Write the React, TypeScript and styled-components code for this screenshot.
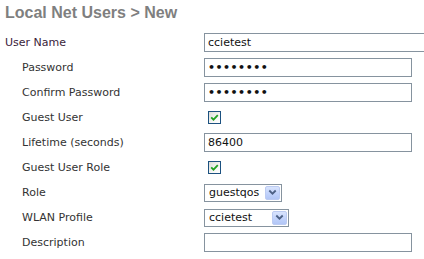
import styled, { createGlobalStyle } from "styled-components";

const GlobalStyle = createGlobalStyle`
  html, body {
    margin: 0;
    padding: 0;
    background: #ffffff;
  }
`;

const Page = styled.div`
  width: 424px;
  height: 259px;
  overflow: hidden;
  padding: 0 0 0 5px;
  box-sizing: border-box;
  font-family: "DejaVu Sans", Verdana, sans-serif;
  font-size: 11px;
`;

const Title = styled.h1`
  margin: 0;
  padding-top: 4px;
  height: 25px;
  box-sizing: border-box;
  font-family: "Liberation Sans", Arial, sans-serif;
  font-size: 16px;
  line-height: 18px;
  font-weight: bold;
  color: #7f7f7f;
  white-space: nowrap;
`;

const Form = styled.div`
  display: grid;
  grid-template-columns: 199px 1fr;
  grid-auto-rows: 25px;
  align-items: center;
  padding-top: 5px;
`;

const Label = styled.div<{ $indent?: boolean; $primary?: boolean }>`
  padding-left: ${(p) => (p.$indent ? "17px" : "0")};
  color: ${(p) => (p.$primary ? "#3a1d3a" : "#333333")};
  white-space: nowrap;
`;

const Field = styled.div`
  display: flex;
  align-items: center;
  min-width: 0;
`;

const TextInput = styled.input<{ $wide?: boolean }>`
  box-sizing: border-box;
  width: ${(p) => (p.$wide ? "240px" : "208px")};
  height: 19px;
  margin: 0;
  padding: 0 3px;
  border: 1px solid #86939f;
  background: #ffffff;
  font-family: "DejaVu Sans", Verdana, sans-serif;
  font-size: 11px;
  color: #111111;
  outline: none;
  flex-shrink: 0;
`;

const PasswordInput = styled(TextInput)`
  font-size: 11px;
  letter-spacing: 0.5px;
  font-weight: bold;
`;

const CheckBox = styled.span`
  display: inline-flex;
  align-items: center;
  justify-content: center;
  width: 13px;
  height: 13px;
  box-sizing: border-box;
  margin-left: 4px;
  border: 1px solid #1c5180;
  background: linear-gradient(135deg, #dcdcd7 0%, #f7f7f5 60%, #ffffff 100%);
`;

const SelectBox = styled.div<{ $width: number }>`
  display: inline-flex;
  align-items: center;
  box-sizing: border-box;
  width: ${(p) => p.$width}px;
  height: 18px;
  padding: 1px;
  border: 1px solid #86939f;
  background: #ffffff;
`;

const SelectText = styled.span`
  flex: 1;
  padding-left: 3px;
  color: #111111;
  white-space: nowrap;
  overflow: hidden;
`;

const ArrowButton = styled.span`
  display: inline-flex;
  align-items: center;
  justify-content: center;
  width: 15px;
  height: 14px;
  box-sizing: border-box;
  border: 1px solid #bccbf2;
  border-radius: 2px;
  background: linear-gradient(180deg, #d9e4fd 0%, #c1d2fb 55%, #b2c6f6 100%);
`;

function Check() {
  return (
    <svg width="9" height="9" viewBox="0 0 9 9">
      <path d="M1.2 4.3 L3.5 6.6 L7.8 2.2" fill="none" stroke="#21a121" strokeWidth="1.8" />
    </svg>
  );
}

function Chevron() {
  return (
    <svg width="9" height="7" viewBox="0 0 9 7">
      <path d="M1.3 1.5 L4.5 4.7 L7.7 1.5" fill="none" stroke="#4d6185" strokeWidth="1.8" />
    </svg>
  );
}

function Select({ value, width }: { value: string; width: number }) {
  return (
    <SelectBox $width={width}>
      <SelectText>{value}</SelectText>
      <ArrowButton>
        <Chevron />
      </ArrowButton>
    </SelectBox>
  );
}

export default function App() {
  return (
    <>
      <GlobalStyle />
      <Page>
        <Title>Local Net Users &gt; New</Title>
        <Form>
          <Label $primary>User Name</Label>
          <Field>
            <TextInput $wide readOnly defaultValue="ccietest" />
          </Field>

          <Label $indent>Password</Label>
          <Field>
            <PasswordInput type="password" readOnly defaultValue="ccietest" />
          </Field>

          <Label $indent>Confirm Password</Label>
          <Field>
            <PasswordInput type="password" readOnly defaultValue="ccietest" />
          </Field>

          <Label $indent>Guest User</Label>
          <Field>
            <CheckBox>
              <Check />
            </CheckBox>
          </Field>

          <Label $indent>Lifetime (seconds)</Label>
          <Field>
            <TextInput readOnly defaultValue="86400" />
          </Field>

          <Label $indent>Guest User Role</Label>
          <Field>
            <CheckBox>
              <Check />
            </CheckBox>
          </Field>

          <Label $indent>Role</Label>
          <Field>
            <Select value="guestqos" width={78} />
          </Field>

          <Label $indent>WLAN Profile</Label>
          <Field>
            <Select value="ccietest" width={85} />
          </Field>

          <Label $indent>Description</Label>
          <Field>
            <TextInput readOnly defaultValue="" />
          </Field>
        </Form>
      </Page>
    </>
  );
}
